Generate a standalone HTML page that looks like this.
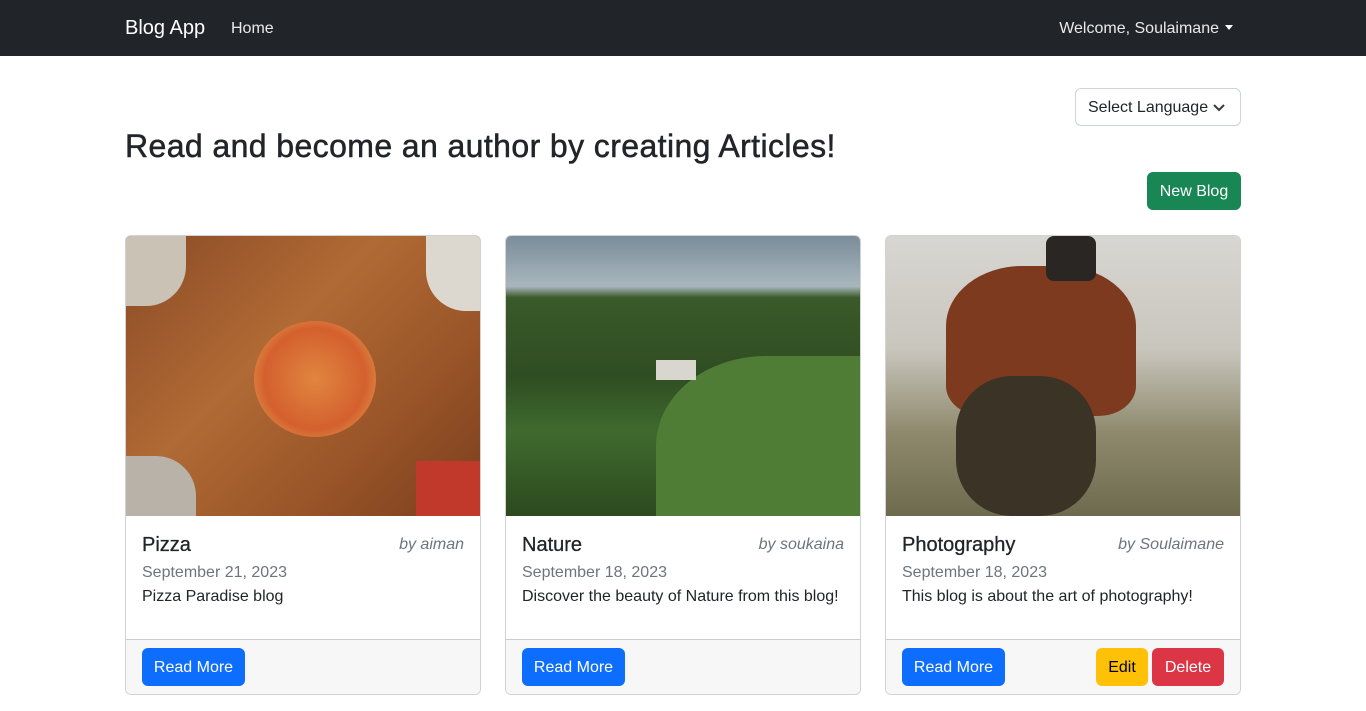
<!DOCTYPE html>
<html><head><meta charset="utf-8"><style>
*{box-sizing:border-box;margin:0;padding:0}
body{font-family:"Liberation Sans",sans-serif;background:#fff;color:#212529;width:1366px;height:711px;overflow:hidden;font-size:16px}
.nav{height:56px;background:#212529;position:relative;color:#fff}
.brand{position:absolute;left:125px;top:17px;font-size:20px;color:#fff}
.home{position:absolute;left:231px;top:20px;font-size:16px;color:rgba(255,255,255,.9)}
.welcome{position:absolute;right:133px;top:20px;font-size:16px;color:rgba(255,255,255,.9)}
.welcome:after{content:"";display:inline-block;margin-left:6px;vertical-align:3px;border-top:5px solid #fff;border-left:4px solid transparent;border-right:4px solid transparent}
.sel{position:absolute;left:1075px;top:88px;width:166px;height:38px;border:1px solid #ced4da;border-radius:6px;font-size:16px;padding:10px 12px;color:#212529}
.sel svg{position:absolute;right:15px;top:14px}
h2{position:absolute;left:125px;top:128px;font-size:32px;font-weight:500;letter-spacing:.4px;-webkit-text-stroke:.5px #212529}
.btn{position:absolute;height:38px;border-radius:6px;font-size:16px;color:#fff;text-align:center;line-height:39px}
.card{position:absolute;top:235px;width:356px;height:460px;border:1px solid rgba(0,0,0,.175);border-radius:6px;overflow:hidden}
.img{height:280px;position:relative;overflow:hidden}
.title{position:absolute;left:16px;top:298px;font-size:20px;font-weight:500;-webkit-text-stroke:.3px #212529}
.by{position:absolute;right:16px;top:300px;font-size:16px;font-style:italic;color:#6c757d}
.date{position:absolute;left:16px;top:328px;color:#6c757d}
.txt{position:absolute;left:16px;top:352px}
.foot{position:absolute;left:0;right:0;top:403px;bottom:0;background:#f7f7f7;border-top:1px solid rgba(0,0,0,.175)}
</style></head><body>
<div class="nav"><span class="brand">Blog App</span><span class="home">Home</span><span class="welcome">Welcome, Soulaimane</span></div>
<div class="sel">Select Language<svg width="12" height="9" viewBox="0 0 12 9"><path d="M1 2l5 5 5-5" stroke="#343a40" stroke-width="2" fill="none"/></svg></div>
<h2>Read and become an author by creating Articles!</h2>
<div class="btn" style="left:1147px;top:172px;width:94px;background:#198754">New Blog</div>

<div class="card" style="left:125px">
<div class="img" style="background:linear-gradient(135deg,#8a4a25,#b06a35 40%,#9a5528 70%,#7a3e1e)">
<div style="position:absolute;left:128px;top:85px;width:122px;height:116px;border-radius:50%;background:radial-gradient(circle,#e0863f,#d4602e 60%,#e7b15a)"></div>
<div style="position:absolute;left:0;top:0;width:60px;height:70px;background:#c9c2b5;border-radius:0 0 40px 0"></div>
<div style="position:absolute;left:300px;top:0;width:56px;height:75px;background:#ddd8cf;border-radius:0 0 0 40px"></div>
<div style="position:absolute;left:0;top:220px;width:70px;height:60px;background:#b8b2a8;border-radius:0 40px 0 0"></div>
<div style="position:absolute;left:290px;top:225px;width:66px;height:55px;background:#c0392b"></div>
</div>
<div class="title">Pizza</div><div class="by">by aiman</div><div class="date">September 21, 2023</div><div class="txt">Pizza Paradise blog</div>
<div class="foot"><div class="btn" style="left:16px;top:8px;width:103px;background:#0d6efd">Read More</div></div>
</div>

<div class="card" style="left:505px">
<div class="img" style="background:linear-gradient(180deg,#7a8d9a 0%,#a9b6bd 18%,#3a5a2a 22%,#2f4d22 50%,#3f6a2e 70%,#2c4a1e 100%)">
<div style="position:absolute;left:150px;top:120px;width:220px;height:180px;border-radius:50% 0 0 0;background:#4f7d36"></div>
<div style="position:absolute;left:150px;top:124px;width:40px;height:20px;background:#d9d6cf"></div>
</div>
<div class="title">Nature</div><div class="by">by soukaina</div><div class="date">September 18, 2023</div><div class="txt">Discover the beauty of Nature from this blog!</div>
<div class="foot"><div class="btn" style="left:16px;top:8px;width:103px;background:#0d6efd">Read More</div></div>
</div>

<div class="card" style="left:885px">
<div class="img" style="background:linear-gradient(180deg,#d8d6d2 0%,#c9c6bd 40%,#8f8a6e 70%,#6e6a4e 100%)">
<div style="position:absolute;left:60px;top:30px;width:190px;height:150px;border-radius:40% 40% 20% 20%;background:#7d3a1e"></div>
<div style="position:absolute;left:70px;top:140px;width:140px;height:140px;border-radius:40%;background:#3b3325"></div>
<div style="position:absolute;left:160px;top:0;width:50px;height:45px;background:#2a2624;border-radius:8px"></div>
</div>
<div class="title">Photography</div><div class="by">by Soulaimane</div><div class="date">September 18, 2023</div><div class="txt">This blog is about the art of photography!</div>
<div class="foot"><div class="btn" style="left:16px;top:8px;width:103px;background:#0d6efd">Read More</div>
<div class="btn" style="left:210px;top:8px;width:52px;background:#ffc107;color:#000">Edit</div>
<div class="btn" style="left:266px;top:8px;width:72px;background:#dc3545">Delete</div></div>
</div>
</body></html>
